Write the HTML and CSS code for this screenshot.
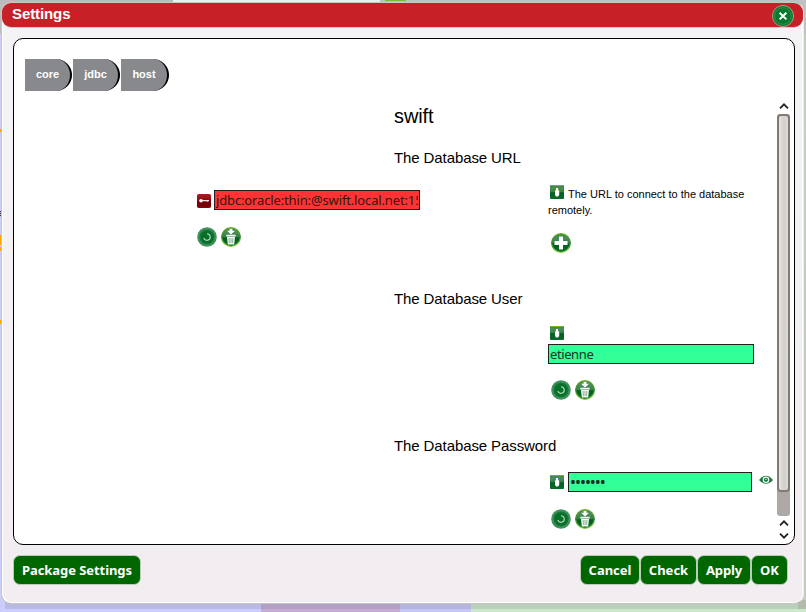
FILE: index.html
```html
<!DOCTYPE html>
<html lang="en">
<head>
<meta charset="utf-8">
<title>Settings</title>
<link rel="stylesheet" href="styles.css">
</head>
<body>
<svg class="defs" aria-hidden="true">
  <defs>
    <linearGradient id="green" x1="0" y1="0" x2="0" y2="1"><stop offset="0" stop-color="#39883f"/><stop offset=".25" stop-color="#4a8c5b"/><stop offset=".48" stop-color="#397f4a"/><stop offset=".55" stop-color="#00601f"/><stop offset="1" stop-color="#0a6a2b"/></linearGradient>
    <linearGradient id="rim" x1="0" y1="0" x2="0" y2="1"><stop offset="0" stop-color="#68ad20"/><stop offset=".5" stop-color="#398434"/><stop offset="1" stop-color="#85cf35"/></linearGradient>
    <linearGradient id="red" x1="0" y1="0" x2="0" y2="1"><stop offset="0" stop-color="#b51821"/><stop offset=".5" stop-color="#8d0810"/><stop offset=".55" stop-color="#6c0007"/><stop offset="1" stop-color="#850008"/></linearGradient>
    <symbol id="reset" viewBox="0 0 20 20"><circle cx="10" cy="10" r="9.8" fill="#438f5e"/><circle cx="10" cy="10" r="8" fill="#187a3b" stroke="#4b9867" stroke-width=".6"/><circle cx="10" cy="10" r="6.3" fill="#06702a"/><path d="M10 6.7a3.3 3.3 0 1 1-3.2 4.3" fill="none" stroke="#b5dcb9" stroke-width="1.1"/></symbol>
    <symbol id="trash" viewBox="0 0 20 20"><circle cx="10" cy="10" r="9.3" fill="url(#green)" stroke="url(#rim)" stroke-width="1.3"/><path d="M8.6 1.8h2.8v2H14L10 7.4 6 3.8h2.6z" fill="#fff"/><path d="M5.3 7.8h9.4v1.7H5.3zM6 10h8l-.8 7.4H6.8z" fill="#f5faf5"/><path d="M8.1 11l.3 5M10 11v5M11.9 11l-.3 5" stroke="#5a9465" stroke-width=".7"/></symbol>
    <symbol id="plus" viewBox="0 0 20 20"><circle cx="10" cy="10" r="9.3" fill="url(#green)" stroke="url(#rim)" stroke-width="1.3"/><path d="M8 3.5h4V8h4.5v4H12v4.5H8V12H3.5V8H8z" fill="#fff"/></symbol>
    <symbol id="info" viewBox="0 0 14 14"><rect width="14" height="14" rx="1" fill="url(#green)"/><path d="M.5.5h13" stroke="#79b41e"/><path d="M6 3h2v1.5L9.2 6v4L8 11.4H6.2L5 10V6l1-1z" fill="#fff"/></symbol>
    <symbol id="key" viewBox="0 0 14 14"><rect width="14" height="14" rx="1.8" fill="url(#red)"/><circle cx="4" cy="6.7" r="1.8" fill="#fff"/><path d="M5 6.7h7M10.5 6.7v1" stroke="#ffe3e3" stroke-width="1.3"/></symbol>
    <symbol id="close" viewBox="0 0 22 22"><circle cx="11" cy="11" r="10.6" fill="#167638" stroke="#9eb795" stroke-width=".8"/><circle cx="11" cy="11" r="8.3" fill="#08782c" stroke="#419157" stroke-width=".8"/><path d="M7.6 7.8l6.8 6.6M14.4 7.8l-6.8 6.6" stroke="#fff" stroke-width="2"/></symbol>
    <symbol id="eye" viewBox="0 0 14 10"><path d="M0 5Q7-3.5 14 5 7 12.5 0 5z" fill="#14783a"/><circle cx="7" cy="4.8" r="3.3" fill="#fff"/><circle cx="7" cy="4.8" r="2.1" fill="#14783a"/><circle cx="7" cy="4.4" r=".7" fill="#fff"/></symbol>
    <symbol id="up" viewBox="0 0 10 6"><path d="M1 5.3l4-4 4 4" fill="none" stroke="#222" stroke-width="1.8"/></symbol>
  </defs>
</svg>
<div class="backdrop">
  <i class="bg-top"></i><i class="bg-tab"></i><i class="bg-right"></i><i class="bg-bottom"></i>
  <i class="fleck fleck-a"></i><i class="fleck fleck-b"></i><i class="fleck fleck-c"></i><i class="fleck fleck-d"></i><i class="fleck fleck-e"></i>
  <i class="bg-shadow"></i>
</div>
<div class="dialog">
  <header class="titlebar"><span>Settings</span><svg class="close"><use href="#close"/></svg></header>
  <main class="panel">
    <nav class="tabs"><a>core</a><a>jdbc</a><a>host</a></nav>
    <div class="viewport">
      <div class="content">
        <h1>swift</h1>
        <section class="first">
          <h2>The Database URL</h2>
          <div class="columns">
            <div class="left">
              <div class="field"><svg class="small key"><use href="#key"/></svg><div class="input error"><span class="url">jdbc:oracle:thin:@swift.local.net:15</span></div></div>
              <div class="actions"><svg><use href="#reset"/></svg><svg><use href="#trash"/></svg></div>
            </div>
            <div class="right">
              <p><svg class="small"><use href="#info"/></svg>The URL to connect to the database remotely.</p>
              <div class="actions add"><svg><use href="#plus"/></svg></div>
            </div>
          </div>
        </section>
        <section class="second">
          <h2>The Database User</h2>
          <div class="columns"><div class="right user">
            <svg class="small"><use href="#info"/></svg>
            <div class="input"><span class="name">etienne</span></div>
            <div class="actions"><svg><use href="#reset"/></svg><svg><use href="#trash"/></svg></div>
          </div></div>
        </section>
        <section class="third">
          <h2>The Database Password</h2>
          <div class="columns"><div class="right password">
            <div class="field"><svg class="small"><use href="#info"/></svg><div class="input"><span class="dots">•••••••</span></div><svg class="eye"><use href="#eye"/></svg></div>
            <div class="actions"><svg><use href="#reset"/></svg><svg><use href="#trash"/></svg></div>
          </div></div>
        </section>
      </div>
      <div class="scrollbar">
        <svg class="arrow"><use href="#up"/></svg>
        <div class="track"><div class="thumb"></div></div>
        <svg class="arrow"><use href="#up"/></svg>
        <svg class="arrow down"><use href="#up"/></svg>
      </div>
    </div>
  </main>
  <footer>
    <button class="package"><span>Package Settings</span></button>
    <div class="buttons"><button class="cancel"><span>Cancel</span></button><button class="check"><span>Check</span></button><button class="apply"><span>Apply</span></button><button class="ok"><span>OK</span></button></div>
  </footer>
</div>
</body>
</html>
```
FILE: styles.css
```css
* { box-sizing: border-box; }
body { margin: 0; width: 806px; height: 612px; overflow: hidden; position: relative; background: #ccccfd; font-family: "Liberation Sans", sans-serif; color: #000; }
svg { display: block; flex: none; }
.defs { position: absolute; width: 0; height: 0; }
.backdrop, .backdrop i { position: absolute; }
.backdrop { inset: 0; background: linear-gradient(90deg, #ccccfd 0 261px, #c4acd5 261px 400px, #c6c6f4 400px 471px, #cce6ce 471px); }
.bg-top { inset: 0 0 auto; height: 34px; background: linear-gradient(90deg, #bcbcbc 0 173px, #eee 173px 380px, #bfc1c3 380px); }
.bg-tab { left: 385px; top: 0; width: 21px; height: 1px; background: #78bd30; }
.bg-right { right: 0; top: 34px; width: 8px; height: 578px; background: #c4cdbb; }
.bg-bottom { right: 0; bottom: 0; width: 335px; height: 3px; background: #cce8cc; }
.bg-shadow { left: 5px; right: 0; top: 600px; height: 9px; background: rgba(90, 100, 100, .17); }
.fleck { left: 0; width: 1px; background: #ffa000; }
.fleck-a { top: 129px; height: 3px; }
.fleck-b { top: 211px; height: 6px; background: repeating-linear-gradient(#334 0 1px, #bbc 1px 2px); }
.fleck-c { top: 235px; height: 10px; }
.fleck-d { top: 247px; height: 4px; }
.fleck-e { top: 320px; height: 4px; }
.dialog { position: absolute; left: 1px; top: 2px; width: 803px; height: 602px; border: 1px solid #c9c5c0; border-right-color: #eee; border-radius: 10px; background: linear-gradient(#f4f4f6, #f2edf1 90%); box-shadow: inset 1px -1px #fff, inset -1px 0 #fff; }
.titlebar { display: flex; justify-content: space-between; height: 24px; padding: 0 9px 0 10px; border-radius: 9px; background: #c72127; color: #fff; font: bold 15px/22px "Liberation Sans", sans-serif; letter-spacing: -.1px; box-shadow: 0 1px #d9cbc6; }
.close { width: 22px; height: 22px; margin-top: 2px; }
.panel { width: 782px; height: 507px; margin: 11px 0 0 11px; padding: 20px 4px 0 11px; border: 1px solid #000; border-radius: 10px; background: #fff; }
.tabs { display: flex; gap: 1px; height: 32px; }
.tabs a { width: 47px; border-right: 2px solid #000; border-radius: 0 17px 17px 0; background: #88898c; color: #fff; text-align: center; font: bold 11px/31px "Liberation Sans", sans-serif; }
.tabs a:last-child { width: 48px; }
.viewport { display: flex; justify-content: space-between; height: 449px; margin-top: 8px; }
.content { width: 750px; height: 441px; }
h1, h2, p { margin: 0; font-weight: normal; }
h1 { padding-left: 369px; font-size: 20px; line-height: 34px; letter-spacing: -.1px; }
h2 { padding-left: 369px; font-size: 15px; line-height: 50px; letter-spacing: -.1px; }
.first { height: 141px; }
.second { height: 147px; }
.columns { display: grid; grid-template-columns: 351px 1fr; padding-left: 172px; }
.right { grid-column: 2; }
.left { padding-top: 7px; }
.field { display: flex; align-items: center; }
.small { width: 14px; height: 14px; }
.key { margin-top: 1px; }
.left .field { gap: 3px; }
.input { width: 206px; height: 20px; border: 1px solid #202020; background: #33ff99; overflow: hidden; white-space: nowrap; padding: 0 1px; color: #173323; font: 13px/18px "Noto Sans", sans-serif; }
.input span { display: block; overflow: hidden; }
.input.error { background: #ff3333; color: #401010; }
.url { letter-spacing: -.14px; }
.name { letter-spacing: -.4px; }
.dots { font-size: 16px; letter-spacing: -1.05px; }
.actions { display: flex; gap: 4px; margin-top: 17px; }
.actions svg { width: 20px; height: 20px; }
.right .actions { padding-left: 3px; margin-top: 16px; }
.right p { width: 206px; padding-top: 3px; font-size: 11px; line-height: 16px; }
.right p .small { display: inline-block; vertical-align: top; margin: -1px 4px 0 2px; }
.right .add { margin-top: 15px; }
.user { padding-top: 2px; }
.user .small { margin: 0 0 4px 2px; }
.password { padding-top: 1px; }
.password .small { margin: 0 4px 0 2px; }
.password .input { width: 184px; }
.eye { width: 14px; height: 10px; margin: -5px 0 0 7px; }
.password .actions { margin-top: 17px; }
.scrollbar { display: flex; flex-direction: column; align-items: center; width: 13px; padding-top: 4px; }
.arrow { width: 10px; height: 6px; }
.track { width: 13px; height: 402px; margin: 5px 0 4px; border-radius: 3px; background: #aea8a6; }
.thumb { height: 378px; border: 2px solid #817b77; border-radius: 4px; background: linear-gradient(90deg, #e7e4e1, #d3cfcb 55%, #dedad6); }
.down { transform: rotate(180deg); margin-top: 7px; }
footer { display: flex; justify-content: space-between; padding: 10px 15px 0 11px; }
.buttons { display: flex; }
button { height: 30px; padding: 0; border: 1px solid #bacdb9; border-radius: 7px; background: #006600; color: #fff; font: bold 13px/28px "Noto Sans", sans-serif; white-space: nowrap; }
button span { display: block; }
.package { width: 128px; letter-spacing: -.07px; }
.cancel { width: 60px; }
.check { width: 57px; }
.apply { width: 54px; letter-spacing: -.1px; }
.ok { width: 37px; }
```
